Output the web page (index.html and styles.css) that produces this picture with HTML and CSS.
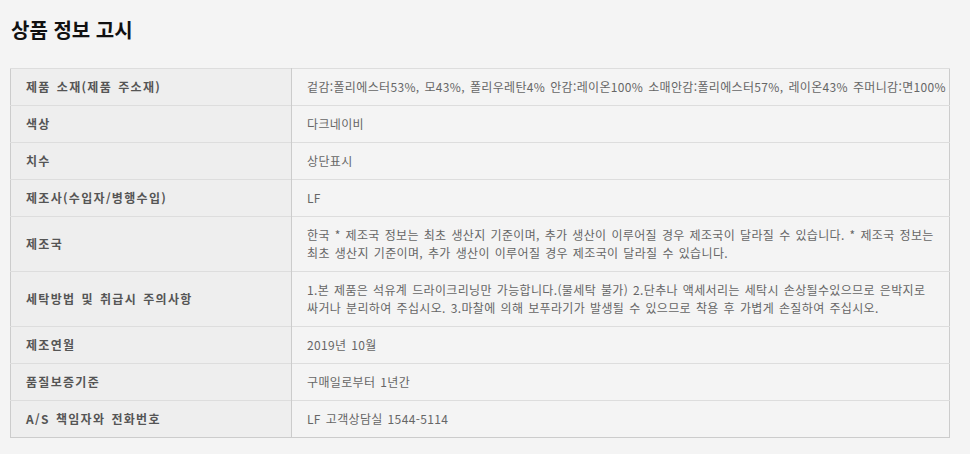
FILE: index.html
```html
<!DOCTYPE html>
<html lang="ko">
<head>
<meta charset="utf-8">
<title>상품 정보 고시</title>
<link rel="stylesheet" href="styles.css">
</head>
<body>
<h2 class="title">상품 정보 고시</h2>
<table class="info">
  <tbody>
    <tr><th>제품 소재(제품 주소재)</th><td>겉감:폴리에스터53%, 모43%, 폴리우레탄4% 안감:레이온100% 소매안감:폴리에스터57%, 레이온43% 주머니감:면100%</td></tr>
    <tr><th>색상</th><td>다크네이비</td></tr>
    <tr><th>치수</th><td>상단표시</td></tr>
    <tr><th>제조사(수입자/병행수입)</th><td>LF</td></tr>
    <tr><th>제조국</th><td>한국 * 제조국 정보는 최초 생산지 기준이며, 추가 생산이 이루어질 경우 제조국이 달라질 수 있습니다. * 제조국 정보는 최초 생산지 기준이며, 추가 생산이 이루어질 경우 제조국이 달라질 수 있습니다.</td></tr>
    <tr><th>세탁방법 및 취급시 주의사항</th><td>1.본 제품은 석유계 드라이크리닝만 가능합니다.(물세탁 불가) 2.단추나 액세서리는 세탁시 손상될수있으므로 은박지로 싸거나 분리하여 주십시오. 3.마찰에 의해 보푸라기가 발생될 수 있으므로 착용 후 가볍게 손질하여 주십시오.</td></tr>
    <tr><th>제조연월</th><td>2019년 10월</td></tr>
    <tr><th>품질보증기준</th><td>구매일로부터 1년간</td></tr>
    <tr><th>A/S 책임자와 전화번호</th><td>LF 고객상담실 1544-5114</td></tr>
  </tbody>
</table>
</body>
</html>
```

FILE: styles.css
```css
html, body {
  background: #f4f4f4;
}
body {
  margin: 10px;
  font-family: "Noto Sans CJK KR", "Noto Sans", sans-serif;
}
.title {
  margin: 0;
  font-size: 20px;
  line-height: 40px;
  font-weight: bold;
  color: #111;
  padding-left: 1px;
}
.info {
  margin-top: 18px;
  width: 940px;
  border-collapse: collapse;
  border: 1px solid #cccccc;
  font-size: 12px;
  line-height: 18px;
}
.info th,
.info td {
  padding: 9px 1px 9px 15px;
  border-top: 1px solid #dddddd;
  text-align: left;
  vertical-align: middle;
  word-break: keep-all;
}
.info th {
  width: 264px;
  background: #eeeeee;
  color: #555555;
  font-weight: bold;
  border-right: 1px solid #cccccc;
  letter-spacing: 1.3px;
  word-spacing: 1.5px;
}
.info td {
  color: #666666;
  background: #f4f4f4;
  letter-spacing: 0.35px;
  word-spacing: 1.2px;
}
```
